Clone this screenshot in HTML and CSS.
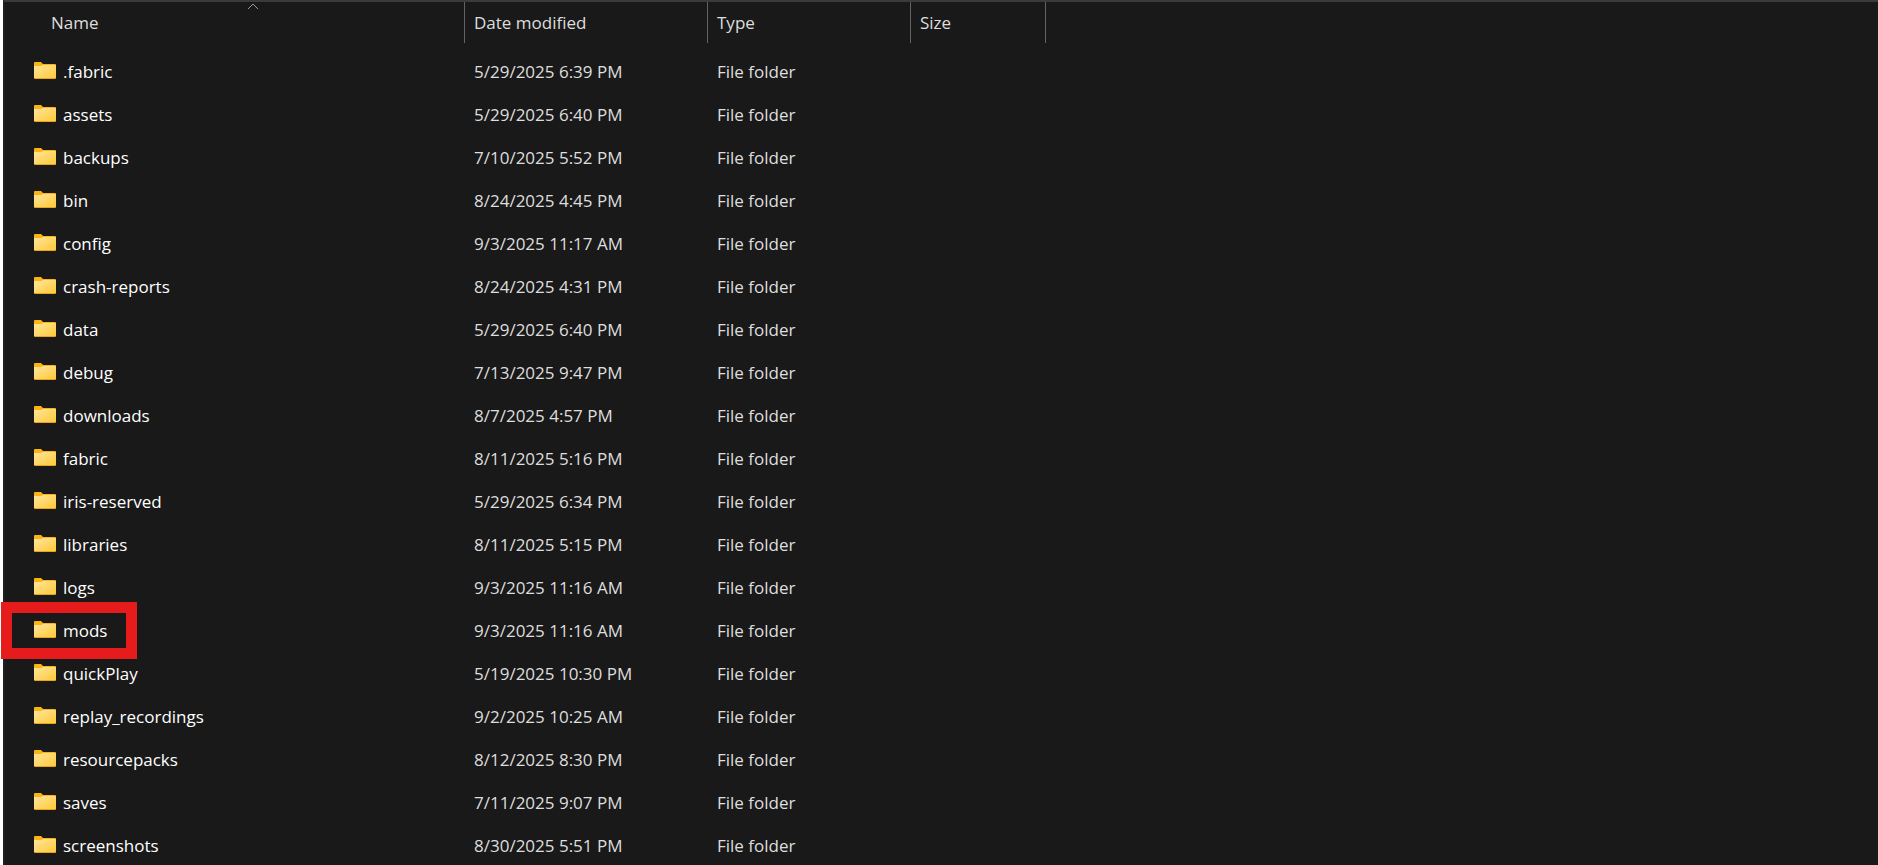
FILE: index.html
```html
<!DOCTYPE html>
<html lang="en">
<head>
  <meta charset="UTF-8" />
  <title>.minecraft</title>
  <link rel="stylesheet" href="styles.css">
</head>
<body>
  <svg width="0" height="0" class="defs">
    <defs>
      <linearGradient id="folder-front" x1="0" y1="0" x2="1" y2="1">
        <stop offset="0" stop-color="#ffe69f" />
        <stop offset="1" stop-color="#ffc937" />
      </linearGradient>
      <symbol id="folder" viewBox="0 0 22 20">
        <path d="M0 1Q0 0 1 0H7L9 2H21Q22 2 22 3V8H0Z" fill="#fbb414" />
        <path d="M0 4H7L9 3H22V16H0Z" fill="url(#folder-front)" />
        <path d="M0 16H22Q22 17 21 17H1Q0 17 0 16Z" fill="#eba51c" />
      </symbol>
    </defs>
  </svg>

  <div class="file-list">
    <table>
      <thead>
        <tr>
          <th class="col-name" aria-sort="ascending">
            <svg class="sort-arrow" width="12" height="7" viewBox="0 0 12 7"><path d="M1 6L6 1L11 6" /></svg>
            <button type="button">Name</button>
          </th>
          <th class="col-date"><button type="button">Date modified</button></th>
          <th class="col-type"><button type="button">Type</button></th>
          <th class="col-size"><button type="button">Size</button></th>
          <td></td>
        </tr>
      </thead>
      <tbody id="files"></tbody>
    </table>
  </div>

  <script>
    const folders = [
      ['.fabric', '5/29/2025 6:39 PM'],
      ['assets', '5/29/2025 6:40 PM'],
      ['backups', '7/10/2025 5:52 PM'],
      ['bin', '8/24/2025 4:45 PM'],
      ['config', '9/3/2025 11:17 AM'],
      ['crash-reports', '8/24/2025 4:31 PM'],
      ['data', '5/29/2025 6:40 PM'],
      ['debug', '7/13/2025 9:47 PM'],
      ['downloads', '8/7/2025 4:57 PM'],
      ['fabric', '8/11/2025 5:16 PM'],
      ['iris-reserved', '5/29/2025 6:34 PM'],
      ['libraries', '8/11/2025 5:15 PM'],
      ['logs', '9/3/2025 11:16 AM'],
      ['mods', '9/3/2025 11:16 AM'],
      ['quickPlay', '5/19/2025 10:30 PM'],
      ['replay_recordings', '9/2/2025 10:25 AM'],
      ['resourcepacks', '8/12/2025 8:30 PM'],
      ['saves', '7/11/2025 9:07 PM'],
      ['screenshots', '8/30/2025 5:51 PM']
    ];
    const marked = 'mods';

    document.getElementById('files').innerHTML = folders.map(([name, date]) => `
      <tr>
        <td class="name">
          <div class="entry">
            <svg class="icon" width="22" height="20"><use href="#folder" /></svg>
            <span>${name}</span>
          </div>
          ${name === marked ? '<div class="marker"></div>' : ''}
        </td>
        <td>${date}</td>
        <td>File folder</td>
        <td></td>
        <td></td>
      </tr>`).join('');
  </script>
</body>
</html>
```

FILE: styles.css
```css
* {
  box-sizing: border-box;
}

body {
  margin: 0;
  height: 100vh;
  overflow: hidden;
  background-color: #191919;
  color: #dedede;
  font-family: "Segoe UI", "Open Sans", "Noto Sans", sans-serif;
  font-size: 17px;
  line-height: 24px;
}

.defs {
  position: absolute;
}

.file-list {
  min-height: 100vh;
  border-left: 3px solid #fff;
}

table {
  width: 100%;
  table-layout: fixed;
  border-collapse: separate;
  border-spacing: 0;
  border-top: 2px solid #3b3b3b;
  border-left: 2px solid #202020;
}

th {
  position: relative;
  height: 41px;
  padding: 0;
  border-right: 1px solid #636363;
  font-weight: normal;
  text-align: left;
}

th button {
  width: 100%;
  padding: 0 9px;
  border: 0;
  background: none;
  color: inherit;
  font: inherit;
  text-align: left;
  cursor: pointer;
}

.col-name {
  width: 460px;
}

.col-name button {
  padding-left: 46px;
}

.col-date {
  width: 243px;
}

.col-type {
  width: 203px;
}

.col-size {
  width: 135px;
}

/* centred over the name column, icon gutter excluded */
.sort-arrow {
  position: absolute;
  top: 1px;
  left: 242px;
  fill: none;
  stroke: #9b9b9b;
}

/* gap between header and first row */
tbody::before {
  content: "";
  display: block;
  height: 7px;
}

tbody td {
  height: 43px;
  padding: 0 9px;
}

tbody .name {
  position: relative;
  padding-left: 29px;
  color: #fff;
}

.entry {
  display: flex;
  align-items: center;
  gap: 7px;
}

.marker {
  position: absolute;
  top: -7px;
  left: -4px;
  width: 136px;
  height: 57px;
  border: 11px solid #e61c1c;
}
```
